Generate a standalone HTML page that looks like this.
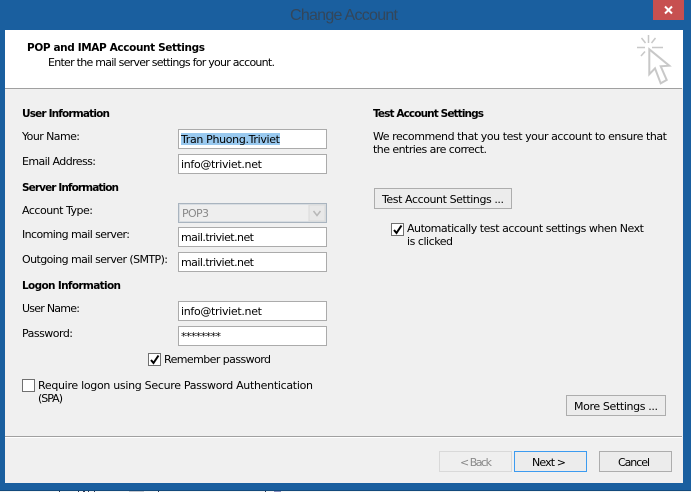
<!DOCTYPE html>
<html><head><meta charset="utf-8"><style>
html,body{margin:0;padding:0;width:691px;height:492px;overflow:hidden;background:#1a5f9f}
svg{display:block}
text{font-family:"DejaVu Sans","Liberation Sans",sans-serif;font-size:11px;fill:#000}
.b{font-weight:bold;font-size:10.5px}
.g{fill:#8a8a8a}
.t{font-family:"Liberation Sans",sans-serif;font-size:16px;fill:#33465a}
</style></head><body>
<svg width="691" height="492" viewBox="0 0 691 492" xmlns="http://www.w3.org/2000/svg">
<rect width="691" height="492" fill="#1a5f9f"/>
<rect x="0" y="490" width="691" height="1" fill="#134a7c"/>
<rect x="0" y="491" width="691" height="1" fill="#f4f4f4"/>
<g fill="#333a55">
<rect x="59" y="491" width="1" height="1"/><rect x="78" y="491" width="1" height="1"/><rect x="83" y="491" width="2" height="1"/><rect x="88" y="491" width="1" height="1"/><rect x="94" y="491" width="1" height="1"/><rect x="158" y="491" width="1" height="1"/><rect x="265" y="491" width="1" height="1"/>
</g>
<rect x="129" y="491" width="15" height="1" fill="#c5c8d0"/>
<rect x="274" y="491" width="7" height="1" fill="#8c8fc0"/>
<rect x="5" y="30" width="678" height="453" fill="#f0f0f0"/>
<rect x="5" y="30" width="678" height="58" fill="#fff"/>
<rect x="5" y="88" width="677" height="1" fill="#a0a0a0"/>
<rect x="5" y="436" width="677" height="1" fill="#a0a0a0"/>
<rect x="5" y="437" width="677" height="1" fill="#fff"/>
<text class="t" x="290" y="20" textLength="108" lengthAdjust="spacing">Change Account</text>
<rect x="653" y="0" width="31" height="20" fill="#c75050"/>
<path d="M665 6.500l7 7M672 6.500l-7 7" stroke="#fff" stroke-width="2" fill="none"/>
<g fill="none" stroke="#c8c8c8" stroke-width="1.500">
<path d="M637 47.500h8M652 47.500h11M648.500 35v8M641.500 38l4 5M655.500 38l-4 5M641 56l4-4.500"/>
<path stroke-width="2" d="M649.300 49.300v25l5.700-6 5.700 15 6-3.300-6-13.700 8.600-.6z"/>
</g>
<text class="b" x="27" y="51" textLength="178" lengthAdjust="spacing">POP and IMAP Account Settings</text>
<text x="48" y="66" textLength="227" lengthAdjust="spacing">Enter the mail server settings for your account.</text>
<text class="b" x="22" y="117" textLength="88" lengthAdjust="spacing">User Information</text>
<text x="22" y="140" textLength="58" lengthAdjust="spacing">Your Name:</text>
<text x="22" y="165" textLength="74" lengthAdjust="spacing">Email Address:</text>
<text class="b" x="22" y="191" textLength="97" lengthAdjust="spacing">Server Information</text>
<text x="22" y="214" textLength="71" lengthAdjust="spacing">Account Type:</text>
<text x="22" y="238" textLength="108" lengthAdjust="spacing">Incoming mail server:</text>
<text x="22" y="263" textLength="146" lengthAdjust="spacing">Outgoing mail server (SMTP):</text>
<text class="b" x="22" y="289" textLength="99" lengthAdjust="spacing">Logon Information</text>
<text x="22" y="312" textLength="58" lengthAdjust="spacing">User Name:</text>
<text x="22" y="337" textLength="51" lengthAdjust="spacing">Password:</text>
<g fill="#fff" stroke="#ababab">
<rect x="178.500" y="129.500" width="148" height="19"/>
<rect x="178.500" y="154.500" width="148" height="19"/>
<rect x="178.500" y="227.500" width="148" height="19"/>
<rect x="178.500" y="252.500" width="148" height="19"/>
<rect x="178.500" y="301.500" width="148" height="19"/>
<rect x="178.500" y="326.500" width="148" height="19"/>
</g>
<rect x="181" y="133" width="99" height="12" fill="#99c9ef"/>
<text x="181" y="143" textLength="99" lengthAdjust="spacing">Tran Phuong.Triviet</text>
<text x="181" y="168" textLength="81" lengthAdjust="spacing">info@triviet.net</text>
<text x="181" y="241" textLength="73" lengthAdjust="spacing">mail.triviet.net</text>
<text x="181" y="266" textLength="73" lengthAdjust="spacing">mail.triviet.net</text>
<text x="181" y="315" textLength="81" lengthAdjust="spacing">info@triviet.net</text>
<text x="181" y="340" textLength="40" lengthAdjust="spacing">********</text>
<rect x="178.500" y="203.500" width="148" height="19" fill="#eee" stroke="#a9b4bf"/>
<rect x="179.500" y="204.500" width="146" height="17" fill="none" stroke="#d8dde2"/>
<rect x="309" y="205" width="16" height="16" fill="#e8e8e8" stroke="#dadada"/>
<path d="M313.500 211l3.500 4.500 3.500-4.500" fill="none" stroke="#b8b8b8" stroke-width="1.500"/>
<text class="g" x="182" y="217" textLength="27" lengthAdjust="spacing">POP3</text>
<rect x="148.500" y="353.500" width="12" height="12" fill="#fff" stroke="#707070"/>
<path d="M151 360l2.500 3 5-7.500" fill="none" stroke="#000" stroke-width="2"/>
<text x="164" y="363" textLength="107" lengthAdjust="spacing">Remember password</text>
<rect x="22.500" y="379.500" width="12" height="12" fill="#fff" stroke="#707070"/>
<text x="38" y="389" textLength="275" lengthAdjust="spacing">Require logon using Secure Password Authentication</text>
<text x="38" y="402" textLength="25" lengthAdjust="spacing">(SPA)</text>
<text class="b" x="373" y="117" textLength="111" lengthAdjust="spacing">Test Account Settings</text>
<text x="373" y="140" textLength="294" lengthAdjust="spacing">We recommend that you test your account to ensure that</text>
<text x="373" y="153" textLength="114" lengthAdjust="spacing">the entries are correct.</text>
<g fill="#ececec" stroke="#adadad">
<rect x="374.500" y="188.500" width="137" height="20"/>
<rect x="566.500" y="395.500" width="99" height="20"/>
<rect x="599.500" y="451.500" width="72" height="20"/>
</g>
<rect x="439.500" y="451.500" width="72" height="20" fill="#efefef" stroke="#d9d9d9"/>
<rect x="514.500" y="451.500" width="72" height="20" fill="#ececec" stroke="#3c9bf0"/>
<text x="382" y="203" textLength="122" lengthAdjust="spacing">Test Account Settings ...</text>
<rect x="391.500" y="223.500" width="12" height="12" fill="#fff" stroke="#707070"/>
<path d="M394 230l2.500 3 5-7.500" fill="none" stroke="#000" stroke-width="2"/>
<text x="407" y="232" textLength="237" lengthAdjust="spacing">Automatically test account settings when Next</text>
<text x="407" y="245" textLength="46" lengthAdjust="spacing">is clicked</text>
<text x="574" y="410" textLength="84" lengthAdjust="spacing">More Settings ...</text>
<text class="g" x="460" y="466" textLength="32" lengthAdjust="spacing">&lt; Back</text>
<text x="532" y="466" textLength="34" lengthAdjust="spacing">Next &gt;</text>
<text x="618" y="466" textLength="32" lengthAdjust="spacing">Cancel</text>
</svg>
</body></html>
